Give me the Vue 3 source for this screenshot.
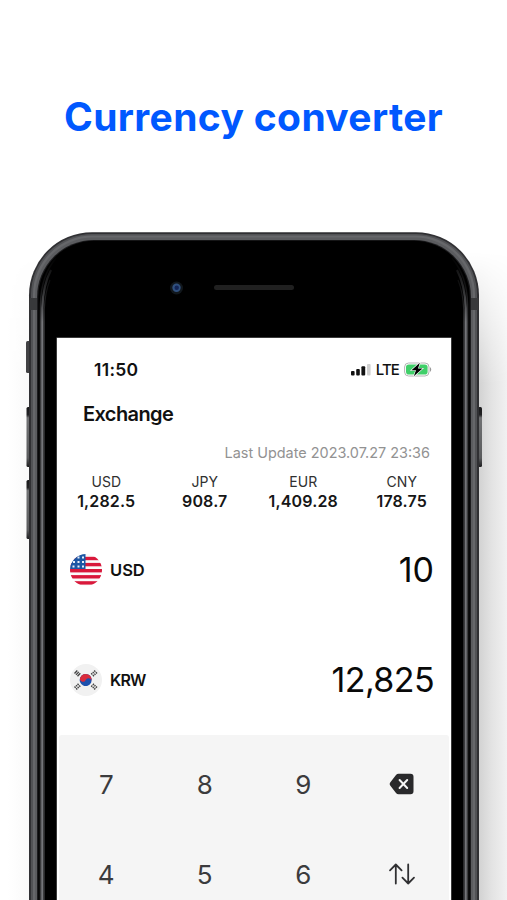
<script setup>
const rates = [
  { code: 'USD', value: '1,282.5' },
  { code: 'JPY', value: '908.7' },
  { code: 'EUR', value: '1,409.28' },
  { code: 'CNY', value: '178.75' },
]
const stripes = [0, 1, 2, 3, 4]
</script>

<template>
  <main class="page">
    <h1 class="title">Currency converter</h1>
    <section class="phone">
      <svg class="shell" width="507" height="680" viewBox="0 0 507 680">
        <defs>
          <linearGradient id="shade" x1="479" x2="507" y1="0" y2="0" gradientUnits="userSpaceOnUse">
            <stop offset="0" stop-color="#d2d2d2" />
            <stop offset=".45" stop-color="#e3e3e3" />
            <stop offset="1" stop-color="#f1f1f1" />
          </linearGradient>
          <linearGradient id="fade" x1="0" x2="0" y1="0" y2="1">
            <stop offset="0" stop-color="#fff" stop-opacity="0" />
            <stop offset=".2" stop-color="#fff" />
          </linearGradient>
          <linearGradient id="left" x1="0" x2="1" y1="0" y2="0">
            <stop offset="0" stop-color="#fff" />
            <stop offset="1" stop-color="#f6f6f6" />
          </linearGradient>
          <mask id="m"><rect x="0" y="20" width="507" height="660" fill="url(#fade)" /></mask>
          <linearGradient id="btn" x1="0" x2="0" y1="0" y2="1">
            <stop offset="0" stop-color="#19191b" />
            <stop offset=".13" stop-color="#222224" />
            <stop offset=".18" stop-color="#707173" />
            <stop offset=".85" stop-color="#5a5b5d" />
            <stop offset="1" stop-color="#1c1c1e" />
          </linearGradient>
          <linearGradient id="edge" x1="0" x2="0" y1="20" y2="90" gradientUnits="userSpaceOnUse">
            <stop offset="0" stop-color="#747579" stop-opacity="0" />
            <stop offset=".5" stop-color="#747579" stop-opacity=".35" />
            <stop offset="1" stop-color="#747579" />
          </linearGradient>
        </defs>
        <g mask="url(#m)">
          <rect x="420" y="20" width="87" height="660" fill="url(#shade)" />
          <rect x="8" y="20" width="30" height="660" fill="url(#left)" />
        </g>
        <rect x="26" y="109" width="5" height="32" rx="1.500" fill="#414144" />
        <rect x="26.500" y="175" width="4" height="60" rx="1.500" fill="url(#btn)" />
        <rect x="26.500" y="248" width="4" height="59" rx="1.500" fill="url(#btn)" />
        <rect x="478" y="175" width="4" height="60" rx="1.500" fill="url(#btn)" />
        <rect x="29" y=".3" width="450" height="800" rx="63" fill="#303033" />
        <rect x="31" y="1.900" width="446" height="800" rx="61" fill="#515255" />
        <rect x="33" y="3.600" width="442" height="800" rx="59" fill="#66676a" />
        <rect x="35" y="5.600" width="438" height="800" rx="58" fill="#5b5c5f" />
        <rect x="37" y="8" width="434" height="800" rx="57" fill="#1c1c1e" />
        <rect x="38.300" y="8.800" width="431.400" height="800" rx="56" fill="#000" />
        <path d="M40.500 680V72Q41 44 56 26M467.500 680V72Q467 44 452 26" fill="none" stroke="url(#edge)" stroke-opacity=".5" stroke-width="1.500" />
        <path d="M42.300 680V76Q43 53 51 38M465.700 680V76Q465 53 457 38" fill="none" stroke="url(#edge)" stroke-width="2.200" />
        <path d="M44.200 680V78Q45 60 50 48M463.800 680V78Q463 60 458 48" fill="none" stroke="url(#edge)" stroke-opacity=".45" stroke-width="1.200" />
        <path d="M29.500 66H37V78H29.500ZM471 66H478.500V78H471Z" fill="#38393b" />
        <circle cx="176.500" cy="56" r="6.500" fill="#11171c" />
        <circle cx="176.500" cy="55.800" r="4.200" fill="#30507e" />
        <circle cx="176.700" cy="55.800" r="2.200" fill="#132557" />
        <rect x="214" y="53" width="80" height="5" rx="2.500" fill="#202020" />
        <rect x="56.500" y="105.500" width="395" height="600" fill="#777" />
      </svg>
      <div class="screen">
        <div class="status">
          <span class="time">11:50</span>
          <span class="signals">
            <svg width="21" height="13" viewBox="0 0 21 13">
              <rect x="0" y="8" width="3.600" height="4.500" rx="1" fill="#111" />
              <rect x="5.200" y="6" width="3.600" height="6.500" rx="1" fill="#111" />
              <rect x="10.400" y="3.300" width="3.800" height="9.200" rx="1" fill="#111" />
              <rect x="16" y="1" width="3.600" height="11.500" rx="1" fill="#d0d0d0" />
            </svg>
            <span class="lte">LTE</span>
            <svg width="29" height="15" viewBox="0 0 29 15">
              <rect x=".6" y="1" width="24.400" height="13" rx="4" fill="#fff" stroke="#b4b4b4" />
              <rect x="2" y="2.500" width="21.600" height="10" rx="2.800" fill="#40cf69" />
              <path d="M26 5Q28.500 7.500 26 10Z" fill="#999" />
              <path d="M15.800.8 7.500 8.200H12L9.800 14.300 18.500 6.500H14Z" fill="#000" stroke="#fff" stroke-width="1.200" paint-order="stroke" />
            </svg>
          </span>
        </div>
        <h2 class="heading">Exchange</h2>
        <p class="update">Last Update 2023.07.27 23:36</p>
        <div class="rates">
          <div v-for="r in rates" :key="r.code" class="rate">
            <span class="code">{{ r.code }}</span>
            <strong>{{ r.value }}</strong>
          </div>
        </div>
        <div class="row">
          <svg width="32" height="32" viewBox="0 0 32 32">
            <defs><clipPath id="round"><circle cx="16" cy="16" r="16" /></clipPath></defs>
            <g clip-path="url(#round)">
              <rect width="32" height="32" fill="#fafafa" />
              <rect v-for="s in stripes" :key="s" x="0" :y="s * 6.1 + 2.8" width="32" height="3.400" fill="#d9183b" />
              <rect width="15.500" height="15" fill="#1c57a5" />
              <path d="M7.500 3.500h2M12 3.500h2M3 8h2M7.500 8h2M12 8h2M2.500 12.500h2M7.500 12.500h2M12 12.500h2" stroke="#e8effa" stroke-width="2" />
            </g>
          </svg>
          <span class="currency">USD</span>
          <span class="amount">10</span>
        </div>
        <div class="row second">
          <svg width="32" height="32" viewBox="0 0 32 32">
            <circle cx="16" cy="16" r="16" fill="#f1f1f1" />
            <g transform="rotate(25 15.700 16)">
              <circle cx="15.700" cy="16" r="6" fill="#1d50ac" />
              <path d="M9.700 16a6 6 0 0 1 12 0a3 3 0 0 0-6 0a3 3 0 0 1-6 0Z" fill="#d92b3b" />
            </g>
            <g fill="none" stroke="#444" stroke-width="1.350">
              <path d="M4.500 9.500 7.300 6.500M6 10.900 8.800 7.900M7.500 12.300 10.300 9.300" />
              <path d="M24.200 6.500 27 9.500M22.700 7.900 25.500 10.900M21.200 9.300 24 12.300" stroke-dasharray="1.700 .7" />
              <path d="M4.500 22.500 7.300 25.500M6 21.100 8.800 24.100M7.500 19.700 10.300 22.700" stroke-dasharray="1.700 .7" />
              <path d="M24.200 25.500 27 22.500M22.700 24.100 25.500 21.100M21.200 22.700 24 19.700" stroke-dasharray="1.700 .7" />
            </g>
          </svg>
          <span class="currency krw-code">KRW</span>
          <span class="amount krw">12,825</span>
        </div>
        <div class="keypad">
          <span>7</span><span>8</span><span>9</span>
          <span>
            <svg width="26" height="22" viewBox="0 0 26 22">
              <path d="M9.500.8H21.500Q24.500.8 24.500 3.800V18.200Q24.500 21.200 21.500 21.200H9.500Q8 21.200 7 20L1.200 12.500Q0 11 1.200 9.500L7 2Q8 .8 9.500.8Z" fill="#29292b" />
              <path d="m10.600 7 7.600 8m0-8-7.600 8" stroke="#f5f5f5" stroke-width="2" stroke-linecap="round" />
            </svg>
          </span>
          <span>4</span><span>5</span><span>6</span>
          <span>
            <svg width="28" height="24" viewBox="0 0 28 24" fill="none" stroke="#303032" stroke-width="1.800" stroke-linecap="round" stroke-linejoin="round">
              <path d="M7.800 21.500V2.500M2 8.300 7.800 2.500 13.600 8.300M20.200 2.500V21.500M14.400 15.700 20.200 21.500 26 15.700" />
            </svg>
          </span>
        </div>
      </div>
    </section>
  </main>
</template>

<style>
body { margin: 0; background: #fff; }
</style>

<style scoped>
.page { width: 507px; height: 900px; overflow: hidden; background: #fff; font-family: Inter, "Liberation Sans", sans-serif; color: #111; }
.title { margin: 0; height: 232px; box-sizing: border-box; padding-top: 93px; text-align: center; font-size: 39px; line-height: 48px; font-weight: 650; letter-spacing: .35px; color: #0058ff; white-space: nowrap; }
.phone { position: relative; height: 668px; box-sizing: border-box; padding: 106px 56px 0 57px; }
.shell { position: absolute; left: 0; top: 0; }
.screen { position: relative; height: 562px; background: #fff; overflow: hidden; }
.status { display: flex; justify-content: space-between; align-items: center; height: 30px; margin-top: 16px; padding: 0 18px 0 37px; }
.time { font-size: 17.500px; font-weight: 600; letter-spacing: .3px; }
.signals { display: flex; align-items: center; gap: 4px; }
.lte { font-size: 15px; font-weight: 500; letter-spacing: -.9px; margin-right: 1px; }
.heading { margin: 15px 0 0 26px; font-size: 20px; line-height: 30px; font-weight: 600; letter-spacing: -.6px; }
.update { margin: 14px 21px 0 0; text-align: right; font-size: 14.450px; line-height: 20px; color: #929292; }
.rates { display: grid; grid-template-columns: repeat(4, 1fr); margin-top: 9px; }
.rate { display: flex; flex-direction: column; align-items: center; font-size: 14px; line-height: 19px; color: #303030; }
.rate strong { font-size: 16px; line-height: 20px; font-weight: 600; letter-spacing: .15px; color: #161616; }
.row { display: flex; align-items: center; height: 40px; margin-top: 39px; padding: 0 17px 0 13px; }
.row.second { margin-top: 70px; }
.currency { margin-left: 8px; font-size: 16.500px; font-weight: 600; }
.krw-code { font-size: 16px; letter-spacing: -.8px; }
.amount { margin-left: auto; font-size: 34px; line-height: 40px; color: #090909; }
.krw { letter-spacing: -.6px; }
.keypad { display: grid; grid-template-columns: repeat(4, 98.500px); grid-auto-rows: 90px; justify-content: center; margin: 35px 2px 0 2px; padding-top: 4px; border-radius: 3px; background: #f5f5f5; }
.keypad span { display: flex; align-items: center; justify-content: center; font-size: 26px; color: #3b3b3d; }
</style>
